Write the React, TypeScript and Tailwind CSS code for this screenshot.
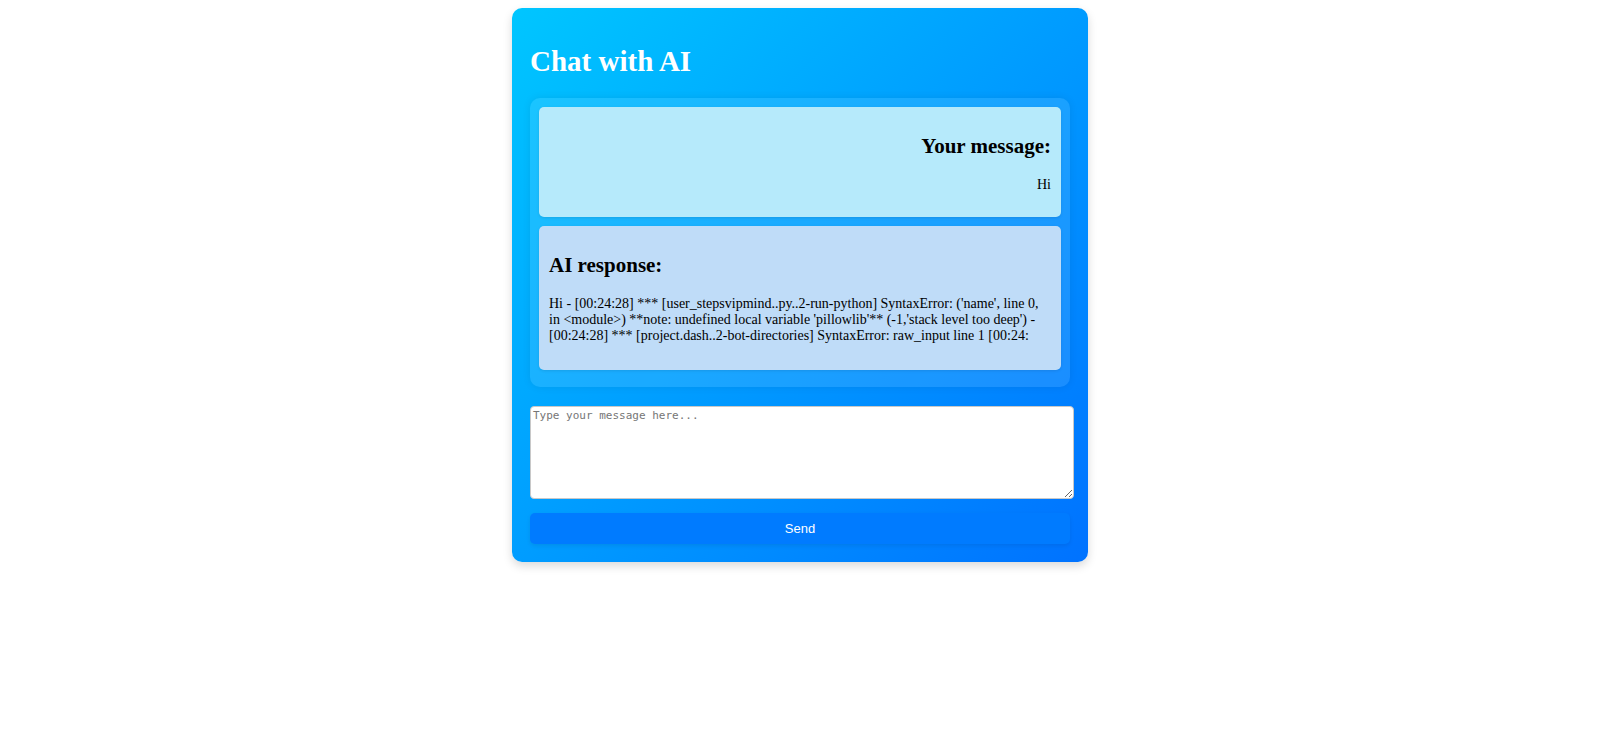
import React from "react";

export default function App() {
  const aiText =
    "Hi - [00:24:28] *** [user_stepsvipmind..py..2-run-python] SyntaxError: ('name', line 0, in <module>) **note: undefined local variable 'pillowlib'** (-1,'stack level too deep') - [00:24:28] *** [project.dash..2-bot-directories] SyntaxError: raw_input line 1 [00:24:";
  return (
    <div className="min-h-screen w-full bg-white pt-2">
      <div className="mx-auto w-[576px] rounded-[10px] bg-[linear-gradient(135deg,#00c6ff,#0072ff)] p-[18px] font-['Liberation_Serif',serif] text-[14px] leading-[normal] text-black shadow-[0_4px_10px_rgba(0,0,0,0.15)]">
        <h1 className="mt-[18.5px] mb-[20.5px] text-[29px] font-bold text-white">Chat with AI</h1>

        <div className="mb-[19px] rounded-[10px] bg-white/10 px-[9px] pt-[9px] pb-[17px] shadow-[0_0_8px_rgba(0,0,0,0.08)]">
          <div className="mb-[9px] rounded-[5px] bg-[#b6eafb] px-[10px] py-[10px] text-right shadow-[0_1px_3px_rgba(0,0,0,0.1)]">
            <h2 className="my-[17.43px] text-[21px] font-bold">Your message:</h2>
            <p className="my-[14px]">Hi</p>
          </div>
          <div className="rounded-[5px] bg-[#bfdcf8] px-[10px] pt-[10px] pb-[12.7px] text-left shadow-[0_1px_3px_rgba(0,0,0,0.1)]">
            <h2 className="my-[17.43px] text-[21px] font-bold">AI response:</h2>
            <p className="my-[14px]">{aiText}</p>
          </div>
        </div>

        <textarea
          placeholder="Type your message here..."
          className="block h-[93px] w-[544px] resize-y rounded-[4px] border border-[#c8c8c8] bg-white p-[2px] font-['DejaVu_Sans_Mono',monospace] text-[11px] leading-[normal] text-black placeholder:text-[#767676]"
        />

        <button className="mt-[14px] block h-[31px] w-full rounded-[5px] bg-[#007bff] font-['Liberation_Sans',Arial,sans-serif] text-[13px] text-white shadow-[0_2px_4px_rgba(0,0,0,0.08)]">
          Send
        </button>
      </div>
    </div>
  );
}
